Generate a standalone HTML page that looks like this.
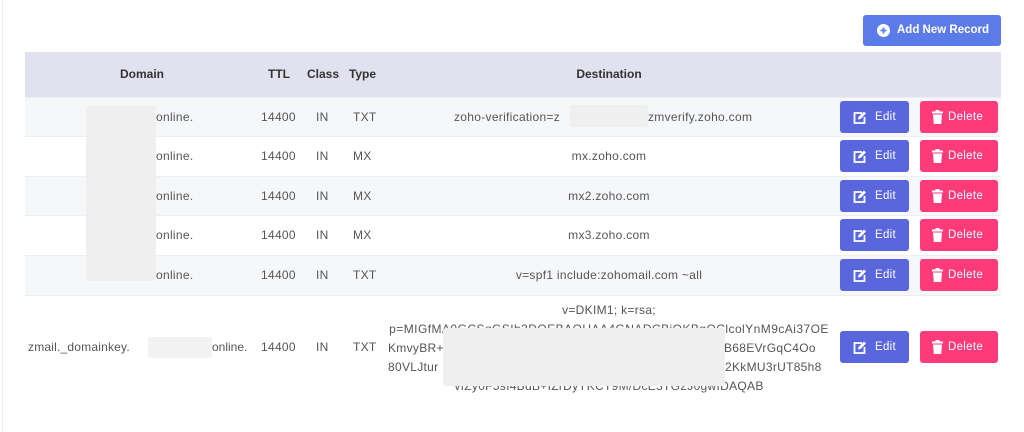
<!DOCTYPE html>
<html><head><style>
body{margin:0;width:1024px;height:432px;background:#fff;position:relative;overflow:hidden;font-family:"Liberation Sans",sans-serif;font-size:12px;color:#555;letter-spacing:0.3px}
.a{position:absolute}
.c{position:absolute;text-align:center;white-space:nowrap}
.row{position:absolute;left:25px;width:976px;border-top:1px solid #eceef2}
.btn{position:absolute;height:32px;border-radius:3px;color:#fff;font-size:11.5px;line-height:32px}
.e{left:840px;width:69px;background:#5a66dc}
.d{left:920px;width:78px;background:#fd3a7a}
.blur{position:absolute;background:#efefef;border-radius:3px}
</style></head><body>
<div class="a" style="left:2px;top:0;width:1px;height:432px;background:#ececf0"></div>
<div class="btn" style="left:863px;top:15px;width:138px;height:31px;background:#5b7be9;line-height:31px;font-weight:bold;font-size:11.5px;letter-spacing:0">
<svg class="a" style="left:14px;top:9px" width="13" height="13" viewBox="0 0 13 13"><circle cx="6.5" cy="6.5" r="6.5" fill="#fff"/><path d="M6.5 3.5v6M3.5 6.5h6" stroke="#5b7be9" stroke-width="1.8"/></svg>
<span class="a" style="left:34px">Add New Record</span></div>
<div class="a" style="left:25px;top:52px;width:976px;height:45px;background:#e2e1ef;color:#333;font-weight:bold;font-size:12px;letter-spacing:0">
<span class="c" style="left:90px;width:54px;top:15px">Domain</span>
<span class="c" style="left:240px;width:28px;top:15px">TTL</span>
<span class="c" style="left:278px;width:40px;top:15px">Class</span>
<span class="c" style="left:320px;width:35px;top:15px">Type</span>
<span class="c" style="left:530px;width:108px;top:15px">Destination</span>
</div>
<div class="row" style="top:97px;height:39px;background:#f6f7f9"></div>
<div class="row" style="top:136px;height:40px;background:#fff"></div>
<div class="row" style="top:176px;height:39px;background:#f6f7f9"></div>
<div class="row" style="top:215px;height:40px;background:#fff"></div>
<div class="row" style="top:255px;height:40px;background:#f6f7f9"></div>
<div class="row" style="top:295px;height:105px;background:#fff"></div>
<div class="blur" style="left:86px;top:106px;width:70px;height:175px"></div>

<span class="c" style="left:156px;top:110px">online.</span><span class="c" style="left:261px;top:110px">14400</span><span class="c" style="left:316px;top:110px">IN</span><span class="c" style="left:353px;top:110px">TXT</span><span class="c" style="left:454px;top:110px">zoho-verification=z</span><span class="blur" style="left:570px;top:105px;width:78px;height:22px"></span><span class="c" style="left:648px;top:110px">zmverify.zoho.com</span>
<span class="c" style="left:156px;top:149px">online.</span><span class="c" style="left:261px;top:149px">14400</span><span class="c" style="left:316px;top:149px">IN</span><span class="c" style="left:353px;top:149px">MX</span><span class="c" style="left:309px;width:600px;top:149px">mx.zoho.com</span>
<span class="c" style="left:156px;top:189px">online.</span><span class="c" style="left:261px;top:189px">14400</span><span class="c" style="left:316px;top:189px">IN</span><span class="c" style="left:353px;top:189px">MX</span><span class="c" style="left:309px;width:600px;top:189px">mx2.zoho.com</span>
<span class="c" style="left:156px;top:228px">online.</span><span class="c" style="left:261px;top:228px">14400</span><span class="c" style="left:316px;top:228px">IN</span><span class="c" style="left:353px;top:228px">MX</span><span class="c" style="left:309px;width:600px;top:228px">mx3.zoho.com</span>
<span class="c" style="left:156px;top:268px">online.</span><span class="c" style="left:261px;top:268px">14400</span><span class="c" style="left:316px;top:268px">IN</span><span class="c" style="left:353px;top:268px">TXT</span><span class="c" style="left:309px;width:600px;top:268px">v=spf1 include:zohomail.com ~all</span>
<span class="c" style="left:28px;top:340px;letter-spacing:0.2px">zmail._domainkey.</span><span class="blur" style="left:148px;top:337px;width:64px;height:21px;background:#f2f2f2"></span><span class="c" style="left:212px;top:340px;letter-spacing:0">online.</span><span class="c" style="left:261px;top:340px">14400</span><span class="c" style="left:316px;top:340px">IN</span><span class="c" style="left:353px;top:340px">TXT</span>
<span class="c" style="left:309px;width:600px;top:303px">v=DKIM1; k=rsa;</span>
<span class="c" style="left:309px;width:600px;top:322px;letter-spacing:0.45px">p=MIGfMA0GCSqGSIb3DQEBAQUAA4GNADCBiQKBgQClcolYnM9cAi37OE</span>
<span class="c" style="left:388px;top:341px">KmvyBR+</span><span class="c" style="left:724px;top:341px">B68EVrGqC4Oo</span>
<span class="c" style="left:388px;top:360px">80VLJtur</span><span class="c" style="left:725px;top:360px">2KkMU3rUT85h8</span>
<span class="c" style="left:309px;width:600px;top:379px">vIZy0F5sI4BdB+IZrDyYKCT9M/DcE3TG2J0gwIDAQAB</span>
<span class="blur" style="left:443px;top:328px;width:282px;height:58px;background:#efefef"></span>

<div class="btn e" style="top:101px"></div><div class="btn d" style="top:101px"></div>
<div class="btn e" style="top:140px"></div><div class="btn d" style="top:140px"></div>
<div class="btn e" style="top:180px"></div><div class="btn d" style="top:180px"></div>
<div class="btn e" style="top:219px"></div><div class="btn d" style="top:219px"></div>
<div class="btn e" style="top:259px"></div><div class="btn d" style="top:259px"></div>
<div class="btn e" style="top:331px"></div><div class="btn d" style="top:331px"></div>
<script>
document.querySelectorAll('.e').forEach(function(b){b.innerHTML='<svg class="a" style="left:13px;top:10px" width="14" height="13" viewBox="0 0 14 13"><path d="M9 2H1.5v10h10V6" fill="none" stroke="#fff" stroke-width="1.8"/><path d="M5 8.5l.5-2.5L11 .5l2 2L7.5 8z" fill="#fff"/></svg><span class="a" style="left:35px">Edit</span>';});
document.querySelectorAll('.d').forEach(function(b){b.innerHTML='<svg class="a" style="left:12px;top:9px" width="11" height="14" viewBox="0 0 11 14"><rect x="0" y="1.5" width="11" height="2" fill="#fff"/><rect x="3.5" y="0" width="4" height="2" fill="#fff"/><path d="M1 4.5h9l-.8 9.5H1.8z" fill="#fff"/></svg><span class="a" style="left:28px">Delete</span>';});
</script>
</body></html>
